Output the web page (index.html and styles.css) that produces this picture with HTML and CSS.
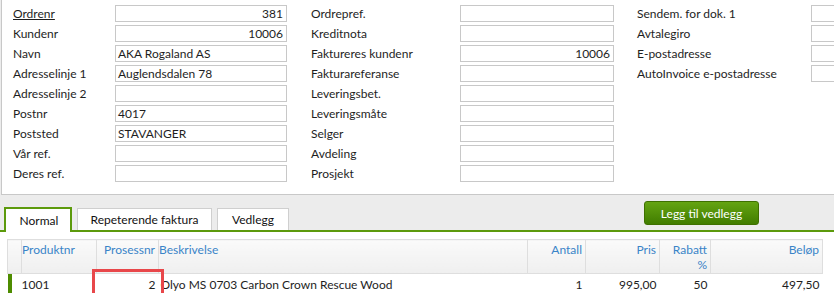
FILE: index.html
```html
<!DOCTYPE html>
<html lang="no">
<head>
  <meta charset="UTF-8">
  <title>Ordre 381</title>
  <link rel="stylesheet" href="styles.css">
</head>
<body>
  <div class="head-panel">
    <div class="field-col col-a">
      <label class="lbl link">Ordrenr</label><div class="box num">381</div>
      <label class="lbl">Kundenr</label><div class="box num">10006</div>
      <label class="lbl">Navn</label><div class="box">AKA Rogaland AS</div>
      <label class="lbl">Adresselinje 1</label><div class="box">Auglendsdalen 78</div>
      <label class="lbl">Adresselinje 2</label><div class="box"></div>
      <label class="lbl">Postnr</label><div class="box">4017</div>
      <label class="lbl">Poststed</label><div class="box">STAVANGER</div>
      <label class="lbl">Vår ref.</label><div class="box"></div>
      <label class="lbl">Deres ref.</label><div class="box"></div>
    </div>
    <div class="field-col col-b">
      <label class="lbl">Ordrepref.</label><div class="box"></div>
      <label class="lbl">Kreditnota</label><div class="box"></div>
      <label class="lbl">Faktureres kundenr</label><div class="box num">10006</div>
      <label class="lbl">Fakturareferanse</label><div class="box"></div>
      <label class="lbl">Leveringsbet.</label><div class="box"></div>
      <label class="lbl">Leveringsmåte</label><div class="box"></div>
      <label class="lbl">Selger</label><div class="box"></div>
      <label class="lbl">Avdeling</label><div class="box"></div>
      <label class="lbl">Prosjekt</label><div class="box"></div>
    </div>
    <div class="field-col col-c">
      <label class="lbl">Sendem. for dok. 1</label><div class="box"></div>
      <label class="lbl">Avtalegiro</label><div class="box"></div>
      <label class="lbl">E-postadresse</label><div class="box"></div>
      <label class="lbl">AutoInvoice e-postadresse</label><div class="box"></div>
    </div>
  </div>

  <div class="tab-bar">
    <div class="tabs">
      <div class="tab active">Normal</div>
      <div class="tab">Repeterende faktura</div>
      <div class="tab">Vedlegg</div>
    </div>
    <button class="green-btn">Legg til vedlegg</button>
  </div>

  <div class="tab-body">
    <table class="lines">
      <colgroup>
        <col class="c-mark"><col class="c-prod"><col class="c-proc"><col class="c-desc">
        <col class="c-qty"><col class="c-price"><col class="c-disc"><col class="c-sum">
      </colgroup>
      <thead>
        <tr>
          <th></th>
          <th class="left">Produktnr</th>
          <th>Prosessnr</th>
          <th class="left">Beskrivelse</th>
          <th>Antall</th>
          <th>Pris</th>
          <th>Rabatt<br>%</th>
          <th>Beløp</th>
        </tr>
      </thead>
      <tbody>
        <tr>
          <td class="marker"></td>
          <td class="left">1001</td>
          <td class="editing">2</td>
          <td class="left desc">Olyo MS 0703 Carbon Crown Rescue Wood</td>
          <td>1</td>
          <td>995,00</td>
          <td>50</td>
          <td>497,50</td>
        </tr>
      </tbody>
    </table>
  </div>
</body>
</html>
```
FILE: styles.css
```css
* {
  box-sizing: border-box;
  margin: 0;
  padding: 0;
}
body {
  font-family: Lato, 'Noto Sans', Arial, sans-serif;
  font-size: 12px;
  color: #1e1e1e;
  background-color: #ececec;
  height: 293px;
  overflow: hidden;
}
.head-panel {
  display: flex;
  margin-left: 1px;
  height: 195px;
  padding: 5px 0 0 11px;
  background-color: #fff;
  border-left: 1px solid #c8c8c8;
  border-bottom: 1px solid #c8c8c8;
  overflow: hidden;
}
.field-col {
  display: grid;
  grid-auto-rows: 17px;
  row-gap: 3px;
  align-content: start;
  flex-shrink: 0;
}
.col-a {
  grid-template-columns: 102px 172px;
}
.col-b {
  grid-template-columns: 149px 154px;
  margin-left: 24px;
}
.col-c {
  grid-template-columns: 174px 60px;
  margin-left: 23px;
}
.lbl {
  line-height: 17px;
  white-space: nowrap;
}
.lbl.link {
  text-decoration: underline;
}
.box {
  border: 1px solid #c8c8c8;
  background-color: #fff;
  line-height: 15px;
  padding: 0 3px 0 2px;
  white-space: nowrap;
  overflow: hidden;
}
.box.num {
  text-align: right;
}
.tab-bar {
  display: flex;
  align-items: flex-end;
  justify-content: space-between;
  height: 37px;
  padding: 0 75px 0 4px;
  border-bottom: 2px solid #5c9a0c;
}
.tabs {
  display: flex;
  gap: 5px;
  align-items: flex-end;
}
.tab {
  height: 22px;
  line-height: 21px;
  text-align: center;
  white-space: nowrap;
  background-color: #fff;
  border: 1px solid #cfcfcf;
  border-bottom: none;
  color: #111;
}
.tab:nth-child(2) {
  width: 135px;
}
.tab:nth-child(3) {
  width: 72px;
}
.tab.active {
  width: 68px;
  height: 25px;
  line-height: 23px;
  padding-left: 2px;
  border: 2px solid #5c9a0c;
  border-bottom: none;
  margin-bottom: -2px;
}
.green-btn {
  align-self: flex-start;
  margin-top: 6px;
  width: 115px;
  height: 24px;
  font-family: inherit;
  font-size: 12px;
  color: #fff;
  border: 1px solid #3e7000;
  border-radius: 3px;
  background: linear-gradient(#64a412, #417d00);
  cursor: pointer;
}
.tab-body {
  background-color: #fff;
  height: 62px;
  padding: 7px 0 0 7px;
}
.lines {
  table-layout: fixed;
  width: 815px;
  border-collapse: collapse;
}
.c-mark { width: 14px; }
.c-prod { width: 75px; }
.c-proc { width: 62px; }
.c-desc { width: 369px; }
.c-qty { width: 58px; }
.c-price { width: 74px; }
.c-disc { width: 51px; }
.c-sum { width: 112px; }
.lines th {
  height: 34px;
  vertical-align: top;
  padding: 2px 3px 0 0;
  font-weight: normal;
  text-align: right;
  color: #3a84c8;
  line-height: 15px;
  background: linear-gradient(#fafafa, #efefef);
  border: 1px solid #dedede;
}
.lines td {
  height: 20px;
  padding: 2px 3px 0 0;
  text-align: right;
  line-height: 16px;
  white-space: nowrap;
}
.lines .left {
  text-align: left;
}
.lines td.desc {
  padding-left: 2px;
}
.lines td.marker {
  padding: 0;
  background: linear-gradient(90deg, #4e8c00 4px, transparent 4px);
}
.lines td.editing {
  outline: 3px solid #e8474a;
  outline-offset: 2px;
}
```
